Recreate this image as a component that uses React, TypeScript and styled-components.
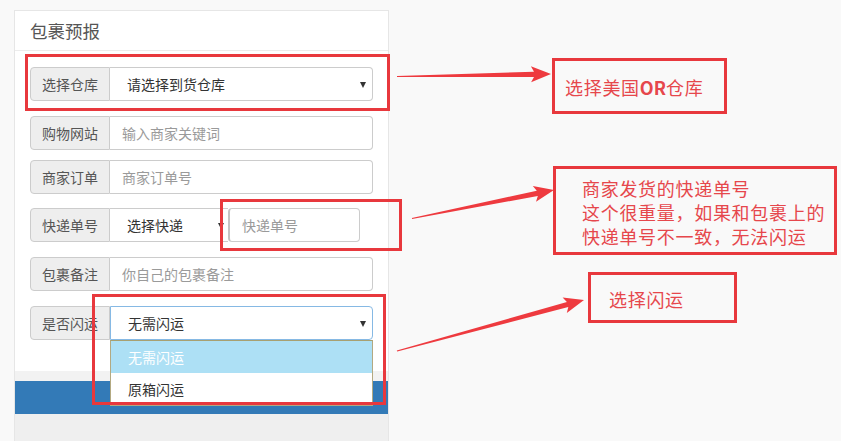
import React from "react";
import styled, { createGlobalStyle } from "styled-components";

const RED = "#e8383d";

const GlobalStyle = createGlobalStyle`
  html, body { margin: 0; padding: 0; background: #f9f9f9; }
  body {
    font-family: "Noto Sans CJK SC", "Noto Sans", "Liberation Sans", sans-serif;
    -webkit-font-smoothing: antialiased;
  }
  * { box-sizing: border-box; }
`;

const Page = styled.div`
  position: relative;
  width: 841px;
  height: 441px;
  overflow: hidden;
  padding: 10px 0 0 14px;
  display: flex;
  align-items: flex-start;
`;

const Panel = styled.section`
  width: 375px;
  height: 440px;
  background: #fff;
  border: 1px solid #e6e6e6;
  border-bottom: 0;
  display: flex;
  flex-direction: column;
`;

const PanelHeading = styled.h3`
  margin: 0;
  height: 40px;
  padding: 0 0 0 15px;
  display: flex;
  align-items: center;
  font-size: 17.5px;
  font-weight: 400;
  color: #555;
  border-bottom: 1px solid #ececec;
`;

const PanelBody = styled.div`
  position: relative;
  height: 320px;
  padding: 16px 15px 0 15px;
`;

const FooterStrip = styled.div`
  height: 10px;
  background: #f2f2f2;
`;

const SubmitBar = styled.div`
  height: 33px;
  background: #337ab7;
`;

const FooterRest = styled.div`
  flex: 1;
  background: #efefef;
`;

const InputGroup = styled.div<{ $gap: number }>`
  display: flex;
  height: 34px;
  margin-bottom: ${(p) => p.$gap}px;
  font-size: 14px;
`;

const Addon = styled.span`
  width: 80px;
  flex: none;
  display: flex;
  align-items: center;
  justify-content: center;
  background: #eee;
  border: 1px solid #ccc;
  border-radius: 4px 0 0 4px;
  color: #555;
`;

const TextField = styled.input`
  flex: 1;
  min-width: 0;
  height: 34px;
  margin: 0;
  padding: 0 12px;
  border: 1px solid #ccc;
  border-left: 0;
  border-radius: 0 4px 4px 0;
  background: #fff;
  font: inherit;
  font-size: 14px;
  color: #333;
  outline: none;
  &::placeholder { color: #9a9a9a; }
`;

const SelectBox = styled.div<{ $focus?: boolean; $width?: number; $joined?: boolean }>`
  position: relative;
  ${(p) => (p.$width ? `width: ${p.$width}px; flex: none;` : "flex: 1;")}
  display: flex;
  align-items: center;
  padding: 0 20px 0 17px;
  background: #fff;
  color: #333;
  border: 1px solid ${(p) => (p.$focus ? "#86b9e4" : "#ccc")};
  border-left: ${(p) => (p.$focus ? "1px solid #86b9e4" : "0")};
  ${(p) => (p.$joined ? "border-right: 0; border-radius: 0;" : "border-radius: 0 4px 4px 0;")}
`;

const Caret = styled.span<{ $right: number }>`
  position: absolute;
  right: ${(p) => p.$right}px;
  top: 14px;
  width: 0;
  height: 0;
  border-left: 3.5px solid transparent;
  border-right: 3.5px solid transparent;
  border-top: 6px solid #333;
`;

const TrackingInput = styled.input`
  width: 132px;
  height: 34px;
  margin: 0;
  padding: 0 12px;
  border: 1px solid #ccc;
  border-left: 2px solid #c4c4c4;
  border-radius: 4px;
  background: #fff;
  font: inherit;
  font-size: 14px;
  outline: none;
  &::placeholder { color: #9a9a9a; }
`;

const DropList = styled.ul`
  position: absolute;
  left: 95px;
  top: 289px;
  width: 263px;
  margin: 0;
  padding: 0;
  list-style: none;
  background: #fff;
  border: 1px solid #b3a981;
  border-top: 1px solid #a8a070;
  z-index: 2;
  font-size: 14px;
`;

const DropOption = styled.li<{ $active?: boolean }>`
  height: 32px;
  display: flex;
  align-items: center;
  padding-left: 17px;
  background: ${(p) => (p.$active ? "#ade0f5" : "#fff")};
  color: ${(p) => (p.$active ? "#fff" : "#333")};
`;

/* annotation layer: callouts drawn over the screenshot */
const Frame = styled.div<{ $x: number; $y: number; $w: number; $h: number }>`
  position: absolute;
  left: ${(p) => p.$x}px;
  top: ${(p) => p.$y}px;
  width: ${(p) => p.$w}px;
  height: ${(p) => p.$h}px;
  border: 3px solid ${RED};
  pointer-events: none;
  z-index: 3;
`;

const Note = styled(Frame)<{ $pad: number }>`
  display: flex;
  align-items: center;
  padding-left: ${(p) => p.$pad}px;
  padding-top: 2px;
  color: #e6474c;
  font-size: 18px;
  letter-spacing: 0.7px;
  line-height: 24px;
`;

const Bold = styled.b`
  font-weight: 700;
  letter-spacing: 0;
`;

const ArrowLayer = styled.svg`
  position: absolute;
  left: 0;
  top: 0;
  pointer-events: none;
  z-index: 4;
`;

type Pt = [number, number];

function arrowPoints(tail: Pt, tip: Pt, headLen = 17, headHalf = 8, tailW = 0.6, neckW = 2.6): string {
  const dx = tip[0] - tail[0];
  const dy = tip[1] - tail[1];
  const L = Math.hypot(dx, dy);
  const ux = dx / L;
  const uy = dy / L;
  const nx = -uy;
  const ny = ux;
  const neck: Pt = [tip[0] - ux * headLen, tip[1] - uy * headLen];
  const back: Pt = [tip[0] - ux * (headLen + 3), tip[1] - uy * (headLen + 3)];
  const pts: Pt[] = [
    [tail[0] - nx * tailW, tail[1] - ny * tailW],
    [neck[0] - nx * neckW, neck[1] - ny * neckW],
    [back[0] - nx * headHalf, back[1] - ny * headHalf],
    tip,
    [back[0] + nx * headHalf, back[1] + ny * headHalf],
    [neck[0] + nx * neckW, neck[1] + ny * neckW],
    [tail[0] + nx * tailW, tail[1] + ny * tailW],
  ];
  return pts.map((p) => `${p[0].toFixed(1)},${p[1].toFixed(1)}`).join(" ");
}

const arrows: { tail: Pt; tip: Pt }[] = [
  { tail: [397, 76.5], tip: [551, 74] },
  { tail: [412, 218.5], tip: [554, 190] },
  { tail: [397, 351], tip: [584, 300] },
];

export default function App() {
  return (
    <>
      <GlobalStyle />
      <Page>
        <Panel>
          <PanelHeading>包裹预报</PanelHeading>
          <PanelBody>
            <InputGroup $gap={15}>
              <Addon>选择仓库</Addon>
              <SelectBox>
                请选择到货仓库
                <Caret $right={6} />
              </SelectBox>
            </InputGroup>
            <InputGroup $gap={10}>
              <Addon>购物网站</Addon>
              <TextField placeholder="输入商家关键词" />
            </InputGroup>
            <InputGroup $gap={14}>
              <Addon>商家订单</Addon>
              <TextField placeholder="商家订单号" />
            </InputGroup>
            <InputGroup $gap={15}>
              <Addon>快递单号</Addon>
              <SelectBox $width={118} $joined>
                选择快递
                <Caret $right={4} />
              </SelectBox>
              <TrackingInput placeholder="快递单号" />
            </InputGroup>
            <InputGroup $gap={15}>
              <Addon>包裹备注</Addon>
              <TextField placeholder="你自己的包裹备注" />
            </InputGroup>
            <InputGroup $gap={0}>
              <Addon>是否闪运</Addon>
              <SelectBox $focus>
                无需闪运
                <Caret $right={6} />
              </SelectBox>
            </InputGroup>
            <DropList>
              <DropOption $active>无需闪运</DropOption>
              <DropOption>原箱闪运</DropOption>
            </DropList>
          </PanelBody>
          <FooterStrip />
          <SubmitBar />
          <FooterRest />
        </Panel>

        <Frame $x={25} $y={54} $w={365} $h={57} />
        <Frame $x={220} $y={199} $w={182} $h={52} />
        <Frame $x={92} $y={294} $w={294} $h={111} />

        <Note $x={552} $y={58} $w={175} $h={56} $pad={10}>
          选择美国<Bold>OR</Bold>仓库
        </Note>
        <Note $x={553} $y={166} $w={284} $h={89} $pad={26}>
          <div>
            商家发货的快递单号
            <br />
            这个很重量，如果和包裹上的
            <br />
            快递单号不一致，无法闪运
          </div>
        </Note>
        <Note $x={588} $y={272} $w={149} $h={51} $pad={18}>
          选择闪运
        </Note>

        <ArrowLayer width={841} height={441} viewBox="0 0 841 441">
          {arrows.map((a, i) => (
            <polygon key={i} points={arrowPoints(a.tail, a.tip)} fill="#ee3a3f" />
          ))}
        </ArrowLayer>
      </Page>
    </>
  );
}
